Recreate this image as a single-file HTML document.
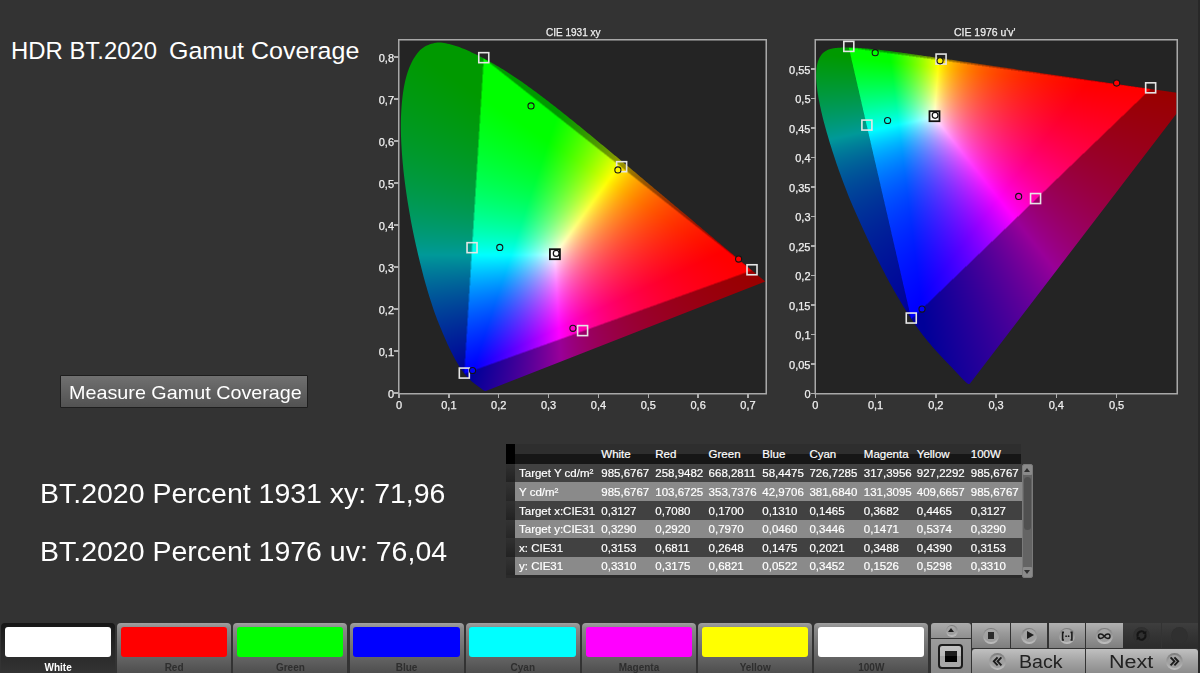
<!DOCTYPE html>
<html><head><meta charset="utf-8">
<style>
*{margin:0;padding:0;box-sizing:border-box}
html,body{width:1200px;height:673px;overflow:hidden;background:#333333;font-family:"Liberation Sans",sans-serif;color:#fff}
body{position:relative}
.abs{position:absolute;white-space:pre}
#cv{position:absolute;left:0;top:0}
.big{position:absolute;white-space:pre;color:#fff;font-size:26px;line-height:30px;transform-origin:0 0}
.tk{position:absolute;font-size:11px;color:#f0f0f0;white-space:nowrap;line-height:12px;-webkit-text-stroke:0.25px #f0f0f0}
.tkr{text-align:right;width:40px}
.tkc{text-align:center;width:40px}
#btn{position:absolute;left:60px;top:375px;width:248px;height:33px;border:1px solid #1e1e1e;background:linear-gradient(#707070,#525252);border-radius:1px}
#btn span{position:absolute;left:7.5px;top:5.6px;transform-origin:0 0;transform:scaleX(1.04);font-size:19px;line-height:22px;color:#fff;white-space:pre}
#tbl{position:absolute;left:506px;top:444px;width:527px;height:134px}
.thb{position:absolute;left:0;top:0;width:9px;height:19.75px;background:#000}
.th1{position:absolute;left:9px;top:0;width:506px;height:10px;background:#2e2e2e}
.th2{position:absolute;left:9px;top:10px;width:506px;height:9.75px;background:#161616}
.tt{position:absolute;font-size:11.5px;line-height:14px;white-space:pre;color:#fff;top:2.7px;-webkit-text-stroke:0.2px #fff}
.th{top:3px;color:#fff}
.row{position:absolute;left:0;width:516px;height:18.6px}
.rd{background:#414141}
.rl{background:#8a8a8a}
.rh{position:absolute;left:0;top:0;width:9px;height:100%;background:linear-gradient(#303030,#222)}
.rl .rh{background:linear-gradient(#333,#262626)}
.sb{position:absolute;left:516px;top:19.75px;width:11px;height:114px;background:#646464;border:1px solid #7a7a7a;border-radius:2px}
.sbt{position:absolute;left:1px;top:12px;width:7px;height:53px;background:#505050;border-radius:3.5px}
.sbb{position:absolute;left:0;width:9px;height:10px;background:#8a8a8a;border-radius:1px}
.sbu,.sbd{position:absolute;left:1px;width:0;height:0;border-left:3.5px solid transparent;border-right:3.5px solid transparent}
.sbu{top:3px;border-bottom:4px solid #303030}
.sbd{top:3px;border-top:4px solid #303030}
#bar{position:absolute;left:0;top:623px;width:1200px;height:50px}
.tab{position:absolute;top:0;width:114.2px;height:50px;border-radius:4px 4px 0 0;background:linear-gradient(#a0a0a0,#8a8a8a 10%,#6a6a6a 60%,#4e4e4e)}
.tab .sw{position:absolute;left:3.8px;top:4.3px;width:106.4px;height:29.9px;border-radius:3px}
.tab .lb{position:absolute;left:0;width:100%;top:38.5px;text-align:center;font-size:10px;line-height:12px;color:#2e2e2e;font-weight:bold}
.tab.sel{background:linear-gradient(#161616,#1e1e1e 20%,#2a2a2a 60%,#333)}
.tab.sel .lb{color:#fff}
.cbtn{position:absolute;background:linear-gradient(#b4b4b4,#8e8e8e 50%,#6e6e6e)}

.cb{position:absolute}
.mb{top:623px;height:25px;background:linear-gradient(#b2b2b2,#9a9a9a 40%,#7e7e7e)}
.mbd{top:623px;height:25px;background:linear-gradient(#3e3e3e,#343434 50%,#2c2c2c)}
.nb{top:649px;height:24px;background:linear-gradient(#c0c0c0,#a4a4a4 50%,#8c8c8c)}
.ic{position:absolute;width:16.5px;height:16.5px;border-radius:50%;background:linear-gradient(#7c7c7c,#c0c0c0)}.ic::after{content:"";position:absolute;left:1.6px;top:1.6px;right:1.6px;bottom:1.6px;border-radius:50%;background:linear-gradient(#a6a6a6,#9c9c9c)}
.icd{position:absolute;width:17px;height:17px;border-radius:50%;background:radial-gradient(circle,#303030 60%,#262626 100%)}
.nt{position:absolute;top:2px;font-size:17.5px;line-height:22px;color:#222}
.chev{position:absolute;width:15px;text-align:center;font-size:17px;line-height:20px;color:#222}
</style></head><body>
<div class="big" id="t1" style="left:10.5px;top:35.6px;font-size:24.5px;transform:scaleX(0.975)">HDR BT.2020</div><div class="big" id="t1b" style="left:168.5px;top:35.6px;font-size:24.5px;transform:scaleX(1.02)">Gamut Coverage</div>
<svg id="fb" style="position:absolute;left:0;top:0" width="1200" height="673">
<defs><clipPath id="c1"><rect x="399.5" y="40.5" width="366" height="352.5"/></clipPath><clipPath id="c2"><rect x="816" y="40.5" width="360.5" height="352.5"/></clipPath>
<linearGradient id="gl" x1="0" y1="0" x2="0" y2="1"><stop offset="0" stop-color="#009900"/><stop offset="0.45" stop-color="#009980"/><stop offset="0.75" stop-color="#0040a0"/><stop offset="1" stop-color="#100099"/></linearGradient>
<linearGradient id="gb" x1="0" y1="0" x2="1" y2="0"><stop offset="0" stop-color="#1a0099"/><stop offset="0.5" stop-color="#880088"/><stop offset="1" stop-color="#990000"/></linearGradient>
</defs>
<rect x="399.5" y="40.5" width="367.0" height="352.5" fill="#242424"/>
<g clip-path="url(#c1)"><polygon points="485.8,390.9 485.8,390.9 485.8,390.9 485.8,390.9 485.8,390.9 485.8,390.9 485.8,390.9 485.7,390.9 485.7,390.9 485.7,390.9 485.7,390.9 485.7,390.9 485.7,390.9 485.6,390.9 485.6,390.9 485.6,390.9 485.6,390.9 485.6,390.9 485.6,390.9 485.5,390.9 485.5,391.0 485.5,391.0 485.5,391.0 485.4,391.0 485.4,391.0 485.4,391.0 485.4,391.0 485.3,391.0 485.3,391.0 485.3,391.0 485.3,391.0 485.2,391.0 485.2,391.0 485.2,391.0 485.1,391.0 485.1,391.0 485.1,391.0 485.0,391.0 485.0,391.0 484.9,391.0 484.9,391.0 484.9,391.0 484.8,391.0 484.8,391.0 484.7,391.0 484.7,390.9 484.6,390.9 484.5,390.9 484.5,390.9 484.4,390.8 484.3,390.8 484.2,390.7 484.1,390.7 484.0,390.6 483.9,390.6 483.8,390.5 483.7,390.4 483.6,390.4 483.5,390.3 483.3,390.2 483.2,390.1 483.1,390.0 482.9,389.9 482.7,389.8 482.6,389.7 482.4,389.5 482.2,389.4 482.0,389.2 481.8,389.1 481.6,388.9 481.4,388.8 481.2,388.6 481.0,388.4 480.7,388.2 480.5,388.1 480.2,387.9 479.9,387.7 479.6,387.4 479.3,387.2 479.0,387.0 478.6,386.7 478.3,386.4 477.9,386.2 477.5,385.9 477.1,385.6 476.7,385.3 476.2,384.9 475.8,384.6 475.3,384.2 474.8,383.9 474.3,383.5 473.8,383.0 473.2,382.6 472.6,382.1 472.0,381.6 471.4,381.1 470.8,380.5 470.2,379.9 469.5,379.3 468.8,378.7 468.1,378.0 467.4,377.2 466.6,376.2 465.7,375.2 464.8,374.1 463.9,373.0 462.9,371.7 461.9,370.3 460.9,368.7 459.8,367.0 458.7,365.3 457.5,363.4 456.3,361.3 455.0,359.0 453.6,356.5 452.3,353.8 450.8,351.0 449.3,347.9 447.8,344.6 446.2,341.1 444.5,337.3 442.8,333.2 440.9,328.8 439.0,324.3 437.1,319.4 435.2,314.2 433.3,308.7 431.3,302.9 429.4,296.7 427.4,290.2 425.5,283.4 423.5,276.4 421.6,269.1 419.7,261.5 417.8,253.5 415.9,245.2 414.1,236.8 412.3,228.2 410.7,219.7 409.2,211.0 407.7,202.2 406.4,193.2 405.1,184.3 404.0,175.5 403.1,166.9 402.3,158.4 401.7,150.0 401.2,141.6 400.9,133.5 400.8,125.6 400.9,118.0 401.3,110.6 401.8,103.5 402.5,96.5 403.5,89.9 404.6,83.7 405.9,77.9 407.5,72.6 409.3,67.6 411.4,63.0 413.6,58.8 415.9,55.2 418.4,52.0 421.0,49.3 423.8,47.2 426.8,45.6 429.8,44.3 432.9,43.4 436.0,42.8 439.2,42.6 442.5,42.8 445.8,43.3 449.2,44.1 452.6,45.0 455.9,46.0 459.3,47.1 462.7,48.4 466.1,49.8 469.5,51.4 472.8,52.9 476.1,54.5 479.4,56.1 482.6,57.8 485.8,59.4 488.9,61.2 492.1,62.9 495.2,64.7 498.3,66.6 501.3,68.4 504.4,70.3 507.4,72.2 510.5,74.2 513.5,76.2 516.5,78.2 519.5,80.3 522.5,82.4 525.5,84.5 528.5,86.6 531.5,88.8 534.5,91.0 537.5,93.2 540.5,95.4 543.4,97.7 546.4,100.0 549.4,102.2 552.3,104.5 555.3,106.9 558.3,109.2 561.2,111.5 564.2,113.9 567.2,116.3 570.2,118.6 573.1,121.0 576.1,123.4 579.1,125.9 582.1,128.3 585.0,130.7 588.0,133.1 591.0,135.6 593.9,138.0 596.9,140.5 599.8,142.9 602.8,145.4 605.7,147.8 608.7,150.3 611.6,152.7 614.6,155.2 617.5,157.6 620.4,160.0 623.3,162.5 626.2,164.9 629.1,167.3 632.0,169.7 634.9,172.1 637.7,174.5 640.6,176.9 643.4,179.3 646.2,181.6 649.0,184.0 651.8,186.3 654.5,188.6 657.3,190.9 660.0,193.2 662.7,195.5 665.4,197.7 668.0,200.0 670.6,202.2 673.2,204.3 675.8,206.5 678.4,208.6 680.9,210.7 683.4,212.8 685.8,214.8 688.2,216.9 690.6,218.8 692.9,220.8 695.2,222.7 697.4,224.6 699.6,226.5 701.7,228.3 703.8,230.0 705.8,231.7 707.8,233.3 709.7,235.0 711.6,236.6 713.5,238.1 715.3,239.7 717.1,241.2 718.9,242.6 720.6,244.0 722.2,245.4 723.8,246.7 725.3,248.0 726.8,249.2 728.2,250.4 729.6,251.6 731.0,252.7 732.3,253.8 733.5,254.9 734.7,255.9 735.9,256.9 737.0,257.8 738.1,258.7 739.1,259.6 740.1,260.4 741.1,261.3 742.0,262.0 742.9,262.8 743.8,263.5 744.6,264.2 745.4,264.9 746.2,265.5 746.9,266.1 747.6,266.7 748.3,267.3 749.0,267.9 749.6,268.4 750.2,268.9 750.8,269.4 751.4,269.9 752.0,270.4 752.5,270.8 753.0,271.3 753.6,271.7 754.0,272.1 754.5,272.5 755.0,272.9 755.5,273.3 755.9,273.7 756.3,274.0 756.7,274.4 757.1,274.7 757.5,275.0 757.9,275.3 758.2,275.6 758.6,275.9 758.9,276.2 759.2,276.4 759.5,276.7 759.8,276.9 760.0,277.1 760.3,277.3 760.5,277.5 760.8,277.7 761.0,277.9 761.2,278.1 761.4,278.3 761.6,278.4 761.8,278.6 762.0,278.7 762.1,278.9 762.3,279.0 762.4,279.2 762.6,279.3 762.7,279.4 762.9,279.5 763.0,279.6 763.1,279.7 763.2,279.8 763.3,279.9 763.4,279.9 763.4,280.0 763.5,280.1 763.6,280.1 763.7,280.2 763.8,280.3 763.8,280.3 763.9,280.4 764.0,280.4 764.0,280.5 764.1,280.5 764.2,280.6 764.2,280.6 764.3,280.7 764.3,280.7 764.4,280.8 764.4,280.8 764.5,280.9 764.5,280.9 764.6,281.0 764.7,281.0 764.8,281.1 764.8,281.2 764.9,281.2 765.0,281.3 765.1,281.4 765.2,281.4 765.2,281.5 765.3,281.5 765.3,281.5 765.3,281.6 765.3,281.6 765.3,281.6" fill="url(#gl)"/>
<defs><linearGradient id="xyR" gradientUnits="userSpaceOnUse" x1="752.0" y1="270.4" x2="474.0" y2="216.0"><stop offset="0" stop-color="#ff0000"/><stop offset="0.55" stop-color="#ff0000"/><stop offset="1" stop-color="#000"/></linearGradient><linearGradient id="xyG" gradientUnits="userSpaceOnUse" x1="483.8" y1="58.3" x2="608.2" y2="322.0"><stop offset="0" stop-color="#00ff00"/><stop offset="0.55" stop-color="#00ff00"/><stop offset="1" stop-color="#000"/></linearGradient><linearGradient id="xyB" gradientUnits="userSpaceOnUse" x1="464.3" y1="373.7" x2="617.9" y2="164.3"><stop offset="0" stop-color="#0000ff"/><stop offset="0.55" stop-color="#0000ff"/><stop offset="1" stop-color="#000"/></linearGradient></defs>
<polygon points="752.0,270.4 483.8,58.3 464.3,373.7" fill="#000"/>
<polygon points="752.0,270.4 483.8,58.3 464.3,373.7" fill="url(#xyR)" style="mix-blend-mode:screen"/>
<polygon points="752.0,270.4 483.8,58.3 464.3,373.7" fill="url(#xyG)" style="mix-blend-mode:screen"/>
<polygon points="752.0,270.4 483.8,58.3 464.3,373.7" fill="url(#xyB)" style="mix-blend-mode:screen"/>
</g>
<rect x="398.75" y="39.75" width="368.5" height="354.0" fill="none" stroke="#a8a8a8" stroke-width="1.5"/>
<rect x="816.0" y="40.5" width="360.5" height="352.5" fill="#242424"/>
<g clip-path="url(#c2)"><polygon points="970.0,383.5 970.0,383.5 970.0,383.5 970.0,383.5 970.0,383.5 969.9,383.5 969.9,383.5 969.9,383.5 969.9,383.6 969.9,383.6 969.8,383.7 969.8,383.7 969.8,383.7 969.8,383.7 969.7,383.7 969.7,383.7 969.7,383.7 969.6,383.7 969.6,383.7 969.6,383.7 969.5,383.8 969.5,383.8 969.4,383.9 969.4,383.9 969.4,383.9 969.3,383.9 969.3,383.9 969.2,383.9 969.2,383.9 969.1,383.9 969.1,383.9 969.0,383.9 968.9,383.9 968.9,383.9 968.8,383.9 968.7,383.9 968.7,383.9 968.6,383.9 968.5,383.9 968.4,384.0 968.4,384.0 968.3,384.0 968.2,383.9 968.0,383.9 967.9,383.8 967.8,383.7 967.6,383.6 967.4,383.5 967.3,383.3 967.0,383.2 966.8,383.0 966.5,382.8 966.3,382.6 966.0,382.3 965.7,382.0 965.4,381.7 965.1,381.4 964.7,381.1 964.4,380.8 964.0,380.4 963.6,380.0 963.1,379.5 962.7,379.0 962.2,378.5 961.7,378.0 961.1,377.4 960.5,376.8 960.0,376.2 959.4,375.6 958.7,374.9 958.1,374.2 957.4,373.4 956.7,372.7 956.0,371.9 955.2,371.1 954.4,370.3 953.6,369.4 952.8,368.5 951.8,367.6 950.9,366.6 949.9,365.5 948.8,364.4 947.8,363.3 946.6,362.1 945.5,360.9 944.3,359.7 943.1,358.4 941.8,357.1 940.6,355.7 939.2,354.3 937.8,352.8 936.4,351.2 934.9,349.5 933.3,347.8 931.8,346.0 930.1,344.0 928.4,342.0 926.7,339.8 924.9,337.7 923.1,335.5 921.3,333.1 919.3,330.4 917.1,327.3 914.8,324.0 912.5,320.6 910.0,316.9 907.5,313.0 904.9,308.8 902.1,304.3 899.3,299.6 896.5,294.8 893.6,289.7 890.6,284.4 887.5,278.8 884.4,272.9 881.2,266.7 878.0,260.4 874.8,254.0 871.6,247.4 868.4,240.7 865.2,233.7 862.0,226.7 858.8,219.6 855.6,212.6 852.5,205.5 849.5,198.4 846.7,191.4 844.0,184.3 841.4,177.3 838.9,170.4 836.5,163.6 834.3,157.1 832.3,150.7 830.3,144.5 828.5,138.4 826.7,132.5 825.1,126.8 823.7,121.5 822.5,116.4 821.3,111.6 820.3,107.0 819.4,102.6 818.6,98.5 817.9,94.6 817.4,91.0 817.0,87.6 816.6,84.3 816.4,81.3 816.2,78.4 816.1,75.7 816.2,73.2 816.3,70.9 816.5,68.6 816.8,66.5 817.1,64.5 817.6,62.7 818.1,61.0 818.7,59.5 819.4,58.0 820.1,56.7 820.9,55.4 821.8,54.3 822.7,53.3 823.7,52.4 824.7,51.6 825.8,50.9 826.9,50.3 828.1,49.8 829.2,49.3 830.4,49.0 831.7,48.6 833.0,48.4 834.3,48.2 835.6,48.0 837.0,47.9 838.4,47.8 839.8,47.7 841.2,47.6 842.6,47.6 844.0,47.5 845.5,47.5 846.9,47.5 848.3,47.5 849.7,47.5 851.2,47.6 852.6,47.6 854.1,47.7 855.5,47.7 857.0,47.8 858.5,47.9 860.0,48.0 861.5,48.1 863.0,48.2 864.6,48.3 866.2,48.5 867.8,48.6 869.4,48.8 871.0,48.9 872.7,49.1 874.4,49.3 876.1,49.4 877.8,49.6 879.6,49.9 881.4,50.1 883.2,50.3 885.0,50.5 886.9,50.8 888.8,51.0 890.8,51.2 892.7,51.5 894.7,51.8 896.8,52.0 898.9,52.3 901.0,52.6 903.1,52.9 905.3,53.2 907.5,53.5 909.8,53.8 912.1,54.2 914.4,54.5 916.8,54.8 919.2,55.2 921.7,55.5 924.2,55.9 926.7,56.2 929.3,56.6 932.0,57.0 934.6,57.4 937.4,57.8 940.1,58.2 942.9,58.6 945.8,59.0 948.7,59.4 951.6,59.8 954.6,60.3 957.6,60.7 960.7,61.2 963.8,61.6 966.9,62.1 970.1,62.6 973.4,63.0 976.6,63.5 980.0,64.0 983.3,64.5 986.7,65.0 990.2,65.5 993.6,66.0 997.1,66.5 1000.6,67.0 1004.2,67.5 1007.8,68.1 1011.4,68.6 1015.0,69.1 1018.7,69.7 1022.4,70.2 1026.0,70.7 1029.7,71.3 1033.4,71.8 1037.1,72.4 1040.7,72.9 1044.3,73.4 1047.8,73.9 1051.3,74.4 1054.9,75.0 1058.4,75.5 1061.9,76.0 1065.4,76.5 1068.9,77.0 1072.4,77.5 1075.8,78.0 1079.2,78.5 1082.4,79.0 1085.7,79.4 1088.8,79.9 1091.9,80.4 1095.0,80.8 1098.0,81.2 1100.9,81.7 1103.8,82.1 1106.6,82.5 1109.3,82.9 1112.0,83.3 1114.6,83.7 1117.1,84.0 1119.6,84.4 1122.0,84.8 1124.3,85.1 1126.6,85.4 1128.8,85.7 1130.9,86.1 1133.0,86.4 1134.9,86.6 1136.9,86.9 1138.8,87.2 1140.6,87.5 1142.4,87.7 1144.1,88.0 1145.8,88.2 1147.4,88.5 1149.0,88.7 1150.6,88.9 1152.1,89.2 1153.6,89.4 1155.1,89.6 1156.5,89.8 1157.9,90.0 1159.3,90.2 1160.6,90.4 1161.8,90.6 1163.1,90.8 1164.3,90.9 1165.5,91.1 1166.6,91.3 1167.7,91.4 1168.7,91.6 1169.7,91.7 1170.7,91.9 1171.6,92.0 1172.5,92.1 1173.4,92.3 1174.2,92.4 1174.9,92.5 1175.7,92.6 1176.4,92.7 1177.1,92.8 1177.8,92.9 1178.4,93.0 1179.0,93.1 1179.6,93.2 1180.1,93.2 1180.7,93.3 1181.2,93.4 1181.7,93.5 1182.1,93.5 1182.6,93.6 1183.0,93.7 1183.4,93.7 1183.7,93.8 1184.0,93.8 1184.3,93.9 1184.6,93.9 1184.8,93.9 1185.1,94.0 1185.4,94.0 1185.6,94.1 1185.9,94.1 1186.1,94.1 1186.3,94.2 1186.5,94.2 1186.7,94.2 1186.9,94.2 1187.1,94.3 1187.3,94.3 1187.5,94.3 1187.7,94.4 1187.8,94.4 1188.0,94.4 1188.2,94.4 1188.4,94.5 1188.6,94.5 1188.8,94.5 1189.0,94.6 1189.3,94.6 1189.6,94.6 1189.9,94.7 1190.2,94.7 1190.4,94.8 1190.6,94.8 1190.7,94.8 1190.8,94.8 1190.8,94.8 1190.9,94.8 1190.9,94.8" fill="url(#gl)"/>
<defs><linearGradient id="uvR" gradientUnits="userSpaceOnUse" x1="1150.7" y1="88.9" x2="880.0" y2="183.3"><stop offset="0" stop-color="#ff0000"/><stop offset="0.55" stop-color="#ff0000"/><stop offset="1" stop-color="#000"/></linearGradient><linearGradient id="uvG" gradientUnits="userSpaceOnUse" x1="848.8" y1="47.5" x2="1031.0" y2="204.0"><stop offset="0" stop-color="#00ff00"/><stop offset="0.55" stop-color="#00ff00"/><stop offset="1" stop-color="#000"/></linearGradient><linearGradient id="uvB" gradientUnits="userSpaceOnUse" x1="911.3" y1="319.1" x2="999.7" y2="68.2"><stop offset="0" stop-color="#0000ff"/><stop offset="0.55" stop-color="#0000ff"/><stop offset="1" stop-color="#000"/></linearGradient></defs>
<polygon points="1150.7,88.9 848.8,47.5 911.3,319.1" fill="#000"/>
<polygon points="1150.7,88.9 848.8,47.5 911.3,319.1" fill="url(#uvR)" style="mix-blend-mode:screen"/>
<polygon points="1150.7,88.9 848.8,47.5 911.3,319.1" fill="url(#uvG)" style="mix-blend-mode:screen"/>
<polygon points="1150.7,88.9 848.8,47.5 911.3,319.1" fill="url(#uvB)" style="mix-blend-mode:screen"/>
</g>
<rect x="815.25" y="39.75" width="362.0" height="354.0" fill="none" stroke="#a8a8a8" stroke-width="1.5"/>
</svg>
<canvas id="cv" width="1200" height="673"></canvas>
<div class="tk" style="left:545.5px;top:26px;transform-origin:0 0;transform:scaleX(0.91)">CIE 1931 xy</div>
<div class="tk" style="left:953.5px;top:26px;transform-origin:0 0;transform:scaleX(0.95)">CIE 1976 u'v'</div>
<div id="ticks"><div class="tk tkr" style="left:354.00px;top:387.80px">0</div><div class="abs" style="left:394px;top:392.25px;width:5px;height:1.5px;background:#b0b0b0"></div>
<div class="tk tkr" style="left:354.00px;top:345.80px">0,1</div><div class="abs" style="left:394px;top:350.25px;width:5px;height:1.5px;background:#b0b0b0"></div>
<div class="tk tkr" style="left:354.00px;top:303.80px">0,2</div><div class="abs" style="left:394px;top:308.25px;width:5px;height:1.5px;background:#b0b0b0"></div>
<div class="tk tkr" style="left:354.00px;top:261.80px">0,3</div><div class="abs" style="left:394px;top:266.25px;width:5px;height:1.5px;background:#b0b0b0"></div>
<div class="tk tkr" style="left:354.00px;top:219.80px">0,4</div><div class="abs" style="left:394px;top:224.25px;width:5px;height:1.5px;background:#b0b0b0"></div>
<div class="tk tkr" style="left:354.00px;top:177.80px">0,5</div><div class="abs" style="left:394px;top:182.25px;width:5px;height:1.5px;background:#b0b0b0"></div>
<div class="tk tkr" style="left:354.00px;top:135.80px">0,6</div><div class="abs" style="left:394px;top:140.25px;width:5px;height:1.5px;background:#b0b0b0"></div>
<div class="tk tkr" style="left:354.00px;top:93.80px">0,7</div><div class="abs" style="left:394px;top:98.25px;width:5px;height:1.5px;background:#b0b0b0"></div>
<div class="tk tkr" style="left:354.00px;top:51.80px">0,8</div><div class="abs" style="left:394px;top:56.25px;width:5px;height:1.5px;background:#b0b0b0"></div>
<div class="tk tkc" style="left:379.00px;top:398.50px">0</div><div class="abs" style="left:398.25px;top:394px;width:1.5px;height:4px;background:#b0b0b0"></div>
<div class="tk tkc" style="left:428.86px;top:398.50px">0,1</div><div class="abs" style="left:448.11px;top:394px;width:1.5px;height:4px;background:#b0b0b0"></div>
<div class="tk tkc" style="left:478.72px;top:398.50px">0,2</div><div class="abs" style="left:497.97px;top:394px;width:1.5px;height:4px;background:#b0b0b0"></div>
<div class="tk tkc" style="left:528.58px;top:398.50px">0,3</div><div class="abs" style="left:547.83px;top:394px;width:1.5px;height:4px;background:#b0b0b0"></div>
<div class="tk tkc" style="left:578.44px;top:398.50px">0,4</div><div class="abs" style="left:597.69px;top:394px;width:1.5px;height:4px;background:#b0b0b0"></div>
<div class="tk tkc" style="left:628.30px;top:398.50px">0,5</div><div class="abs" style="left:647.55px;top:394px;width:1.5px;height:4px;background:#b0b0b0"></div>
<div class="tk tkc" style="left:678.16px;top:398.50px">0,6</div><div class="abs" style="left:697.41px;top:394px;width:1.5px;height:4px;background:#b0b0b0"></div>
<div class="tk tkc" style="left:728.02px;top:398.50px">0,7</div><div class="abs" style="left:747.27px;top:394px;width:1.5px;height:4px;background:#b0b0b0"></div>
<div class="tk tkr" style="left:770.50px;top:388.10px">0</div><div class="abs" style="left:810.5px;top:392.55px;width:5px;height:1.5px;background:#b0b0b0"></div>
<div class="tk tkr" style="left:770.50px;top:358.64px">0,05</div><div class="abs" style="left:810.5px;top:363.09px;width:5px;height:1.5px;background:#b0b0b0"></div>
<div class="tk tkr" style="left:770.50px;top:329.17px">0,1</div><div class="abs" style="left:810.5px;top:333.62px;width:5px;height:1.5px;background:#b0b0b0"></div>
<div class="tk tkr" style="left:770.50px;top:299.70px">0,15</div><div class="abs" style="left:810.5px;top:304.15px;width:5px;height:1.5px;background:#b0b0b0"></div>
<div class="tk tkr" style="left:770.50px;top:270.24px">0,2</div><div class="abs" style="left:810.5px;top:274.69px;width:5px;height:1.5px;background:#b0b0b0"></div>
<div class="tk tkr" style="left:770.50px;top:240.78px">0,25</div><div class="abs" style="left:810.5px;top:245.23px;width:5px;height:1.5px;background:#b0b0b0"></div>
<div class="tk tkr" style="left:770.50px;top:211.31px">0,3</div><div class="abs" style="left:810.5px;top:215.76px;width:5px;height:1.5px;background:#b0b0b0"></div>
<div class="tk tkr" style="left:770.50px;top:181.85px">0,35</div><div class="abs" style="left:810.5px;top:186.30px;width:5px;height:1.5px;background:#b0b0b0"></div>
<div class="tk tkr" style="left:770.50px;top:152.38px">0,4</div><div class="abs" style="left:810.5px;top:156.83px;width:5px;height:1.5px;background:#b0b0b0"></div>
<div class="tk tkr" style="left:770.50px;top:122.92px">0,45</div><div class="abs" style="left:810.5px;top:127.37px;width:5px;height:1.5px;background:#b0b0b0"></div>
<div class="tk tkr" style="left:770.50px;top:93.45px">0,5</div><div class="abs" style="left:810.5px;top:97.90px;width:5px;height:1.5px;background:#b0b0b0"></div>
<div class="tk tkr" style="left:770.50px;top:63.98px">0,55</div><div class="abs" style="left:810.5px;top:68.44px;width:5px;height:1.5px;background:#b0b0b0"></div>
<div class="tk tkc" style="left:795.30px;top:398.50px">0</div><div class="abs" style="left:814.55px;top:394px;width:1.5px;height:4px;background:#b0b0b0"></div>
<div class="tk tkc" style="left:855.55px;top:398.50px">0,1</div><div class="abs" style="left:874.80px;top:394px;width:1.5px;height:4px;background:#b0b0b0"></div>
<div class="tk tkc" style="left:915.80px;top:398.50px">0,2</div><div class="abs" style="left:935.05px;top:394px;width:1.5px;height:4px;background:#b0b0b0"></div>
<div class="tk tkc" style="left:976.05px;top:398.50px">0,3</div><div class="abs" style="left:995.30px;top:394px;width:1.5px;height:4px;background:#b0b0b0"></div>
<div class="tk tkc" style="left:1036.30px;top:398.50px">0,4</div><div class="abs" style="left:1055.55px;top:394px;width:1.5px;height:4px;background:#b0b0b0"></div>
<div class="tk tkc" style="left:1096.55px;top:398.50px">0,5</div><div class="abs" style="left:1115.80px;top:394px;width:1.5px;height:4px;background:#b0b0b0"></div></div>
<div id="btn"><span>Measure Gamut Coverage</span></div>
<div class="big" id="p1" style="left:40px;top:478.5px;font-size:27.5px;transform:scaleX(1.036)">BT.2020 Percent 1931 xy: 71,96</div>
<div class="big" id="p2" style="left:40px;top:536.5px;font-size:27.5px;transform:scaleX(1.036)">BT.2020 Percent 1976 uv: 76,04</div>
<div id="tbl">
<div class="thb"></div><div class="th1"></div><div class="th2"></div>
<div class="tt th" style="left:95.3px">White</div>
<div class="tt th" style="left:149.3px">Red</div>
<div class="tt th" style="left:202.6px">Green</div>
<div class="tt th" style="left:256.3px">Blue</div>
<div class="tt th" style="left:303.4px">Cyan</div>
<div class="tt th" style="left:357.8px">Magenta</div>
<div class="tt th" style="left:410.8px">Yellow</div>
<div class="tt th" style="left:464.8px">100W</div>
<div class="row rd" style="top:19.75px"><div class="rh"></div><div class="tt" style="left:13px">Target Y cd/m²</div><div class="tt" style="left:95.3px">985,6767</div><div class="tt" style="left:149.3px">258,9482</div><div class="tt" style="left:202.6px">668,2811</div><div class="tt" style="left:256.3px">58,4475</div><div class="tt" style="left:303.4px">726,7285</div><div class="tt" style="left:357.8px">317,3956</div><div class="tt" style="left:410.8px">927,2292</div><div class="tt" style="left:464.8px">985,6767</div></div>
<div class="row rl" style="top:38.35px"><div class="rh"></div><div class="tt" style="left:13px">Y cd/m²</div><div class="tt" style="left:95.3px">985,6767</div><div class="tt" style="left:149.3px">103,6725</div><div class="tt" style="left:202.6px">353,7376</div><div class="tt" style="left:256.3px">42,9706</div><div class="tt" style="left:303.4px">381,6840</div><div class="tt" style="left:357.8px">131,3095</div><div class="tt" style="left:410.8px">409,6657</div><div class="tt" style="left:464.8px">985,6767</div></div>
<div class="row rd" style="top:56.95px"><div class="rh"></div><div class="tt" style="left:13px">Target x:CIE31</div><div class="tt" style="left:95.3px">0,3127</div><div class="tt" style="left:149.3px">0,7080</div><div class="tt" style="left:202.6px">0,1700</div><div class="tt" style="left:256.3px">0,1310</div><div class="tt" style="left:303.4px">0,1465</div><div class="tt" style="left:357.8px">0,3682</div><div class="tt" style="left:410.8px">0,4465</div><div class="tt" style="left:464.8px">0,3127</div></div>
<div class="row rl" style="top:75.55px"><div class="rh"></div><div class="tt" style="left:13px">Target y:CIE31</div><div class="tt" style="left:95.3px">0,3290</div><div class="tt" style="left:149.3px">0,2920</div><div class="tt" style="left:202.6px">0,7970</div><div class="tt" style="left:256.3px">0,0460</div><div class="tt" style="left:303.4px">0,3446</div><div class="tt" style="left:357.8px">0,1471</div><div class="tt" style="left:410.8px">0,5374</div><div class="tt" style="left:464.8px">0,3290</div></div>
<div class="row rd" style="top:94.15px"><div class="rh"></div><div class="tt" style="left:13px">x: CIE31</div><div class="tt" style="left:95.3px">0,3153</div><div class="tt" style="left:149.3px">0,6811</div><div class="tt" style="left:202.6px">0,2648</div><div class="tt" style="left:256.3px">0,1475</div><div class="tt" style="left:303.4px">0,2021</div><div class="tt" style="left:357.8px">0,3488</div><div class="tt" style="left:410.8px">0,4390</div><div class="tt" style="left:464.8px">0,3153</div></div>
<div class="row rl" style="top:112.75px"><div class="rh"></div><div class="tt" style="left:13px">y: CIE31</div><div class="tt" style="left:95.3px">0,3310</div><div class="tt" style="left:149.3px">0,3175</div><div class="tt" style="left:202.6px">0,6821</div><div class="tt" style="left:256.3px">0,0522</div><div class="tt" style="left:303.4px">0,3452</div><div class="tt" style="left:357.8px">0,1526</div><div class="tt" style="left:410.8px">0,5298</div><div class="tt" style="left:464.8px">0,3310</div></div>
<div style="position:absolute;left:0;top:131.35px;width:516px;height:2.6px;background:#2a2a2a"></div><div class="sb"><div class="sbb" style="top:0"><div class="sbu"></div></div><div class="sbt"></div><div class="sbb" style="bottom:0"><div class="sbd"></div></div></div>
</div>
<div id="bar">
 <div class="tab sel" style="left:1px"><div class="sw" style="background:#fff"></div><div class="lb">White</div></div>
 <div class="tab" style="left:117px"><div class="sw" style="background:#ff0000"></div><div class="lb">Red</div></div>
 <div class="tab" style="left:233.3px"><div class="sw" style="background:#00ff00"></div><div class="lb">Green</div></div>
 <div class="tab" style="left:349.5px"><div class="sw" style="background:#0000ff"></div><div class="lb">Blue</div></div>
 <div class="tab" style="left:465.7px"><div class="sw" style="background:#00ffff"></div><div class="lb">Cyan</div></div>
 <div class="tab" style="left:581.9px"><div class="sw" style="background:#ff00ff"></div><div class="lb">Magenta</div></div>
 <div class="tab" style="left:698.1px"><div class="sw" style="background:#ffff00"></div><div class="lb">Yellow</div></div>
 <div class="tab" style="left:814.2px"><div class="sw" style="background:#fff"></div><div class="lb">100W</div></div>
</div>

<div id="ctrl">
 <div class="cb" style="left:931px;top:623px;width:40px;height:14.6px;border-radius:3px 3px 0 0;background:linear-gradient(#ababab,#8f8f8f)"><div class="ic" style="left:14.5px;top:1.5px;width:12px;height:12px"></div><div style="position:absolute;left:16.8px;top:5px;width:0;height:0;border-left:3.7px solid transparent;border-right:3.7px solid transparent;border-bottom:4.3px solid #1e1e1e"></div></div>
 <div class="cb" style="left:931px;top:639px;width:40px;height:34px;background:linear-gradient(#9c9c9c,#8a8a8a)">
   <div style="position:absolute;left:7px;top:4.5px;width:25.3px;height:25.2px;border:2.5px solid #1c1c1c;border-radius:4px;background:linear-gradient(#c2c2c2,#b8b8b8 50%,#a6a6a6 50%,#a8a8a8)"></div>
   <div style="position:absolute;left:14px;top:11.7px;width:11.5px;height:11px;background:linear-gradient(#1c1c1c,#1c1c1c 45%,#000 45%)"></div>
 </div>
 <div class="cb mb" style="left:972px;width:38px"><div class="ic" style="left:10.8px;top:4.5px"></div><div style="position:absolute;left:15.5px;top:9.3px;width:6.5px;height:6.7px;background:#2a2a2a"></div></div>
 <div class="cb mb" style="left:1010.8px;width:36.5px"><div class="ic" style="left:10.2px;top:4.5px"></div><div style="position:absolute;left:15.8px;top:8px;width:0;height:0;border-top:4.5px solid transparent;border-bottom:4.5px solid transparent;border-left:7.5px solid #1e1e1e"></div></div>
 <div class="cb mb" style="left:1048.5px;width:36.5px"><div class="ic" style="left:10px;top:4.5px"></div><svg style="position:absolute;left:10px;top:4.5px" width="16.5" height="16.5" viewBox="0 0 16.5 16.5"><path d="M5 4.4 H3.6 V12 H5 M11.5 4.4 H12.9 V12 H11.5 M6.3 8.2 H7.9" fill="none" stroke="#1a1a1a" stroke-width="1.6"/><circle cx="9.6" cy="8.2" r="0.9" fill="#1a1a1a"/></svg></div>
 <div class="cb mb" style="left:1086px;width:36.5px"><div class="ic" style="left:10px;top:4.5px"></div><svg style="position:absolute;left:10px;top:4.5px" width="16.5" height="16.5" viewBox="0 0 16.5 16.5"><path d="M8.25 8.2 C6.8 6.3 5.6 6 4.6 6 C3.3 6 2.5 7 2.5 8.2 C2.5 9.4 3.3 10.4 4.6 10.4 C5.6 10.4 6.8 10.1 8.25 8.2 C9.7 6.3 10.9 6 11.9 6 C13.2 6 14 7 14 8.2 C14 9.4 13.2 10.4 11.9 10.4 C10.9 10.4 9.7 10.1 8.25 8.2Z" fill="none" stroke="#1a1a1a" stroke-width="1.5"/></svg></div>
 <div class="cb mbd" style="left:1123px;width:37.7px"><div class="icd" style="left:10px;top:4px"></div><svg style="position:absolute;left:10px;top:4px" width="17" height="17" viewBox="0 0 17 17"><path d="M4.6 9.2 A4 4 0 0 1 11.6 5.8 M12.4 7.8 A4 4 0 0 1 5.4 11.2" fill="none" stroke="#141414" stroke-width="2"/><path d="M13.4 3.8 L13.2 8 L9.6 6.6Z M3.6 13.2 L3.8 9 L7.4 10.4Z" fill="#141414"/></svg></div>
 <div class="cb mbd" style="left:1161.5px;width:36.5px"><div class="icd" style="left:9.5px;top:4px"></div></div>
 <div class="cb nb" style="left:972px;width:113.3px;border-radius:3px 0 0 0"><div class="ic" style="left:17px;top:4px;width:17px;height:17px"></div><svg style="position:absolute;left:17px;top:4px" width="17" height="17" viewBox="0 0 17 17"><path d="M8.6 4.3 L4.8 8.3 L8.6 12.3 M12.4 4.3 L8.6 8.3 L12.4 12.3" fill="none" stroke="#1c1c1c" stroke-width="1.9"/></svg><div class="nt" style="left:47px;transform-origin:0 0;transform:scaleX(1.12)">Back</div></div>
 <div class="cb nb" style="left:1086px;width:112px;border-radius:0 3px 0 0"><div class="nt" style="left:22.5px;transform-origin:0 0;transform:scaleX(1.23)">Next</div><div class="ic" style="left:80px;top:4px;width:17px;height:17px"></div><svg style="position:absolute;left:80px;top:4px" width="17" height="17" viewBox="0 0 17 17"><path d="M4.6 4.3 L8.4 8.3 L4.6 12.3 M8.4 4.3 L12.2 8.3 L8.4 12.3" fill="none" stroke="#1c1c1c" stroke-width="1.9"/></svg></div>
 <div style="position:absolute;left:1198px;top:0;width:2px;height:673px;background:#282828"></div>
</div>
<script>
(function(){
var fbe=document.getElementById("fb");if(fbe)fbe.parentNode.removeChild(fbe);
var L=[[0.1741,0.0050],[0.1740,0.0050],[0.1738,0.0049],[0.1736,0.0049],[0.1733,0.0048],[0.1730,0.0048],[0.1726,0.0048],[0.1721,0.0048],[0.1714,0.0051],[0.1703,0.0058],[0.1689,0.0069],[0.1669,0.0086],[0.1644,0.0109],[0.1611,0.0138],[0.1566,0.0177],[0.1510,0.0227],[0.1440,0.0297],[0.1355,0.0399],[0.1241,0.0578],[0.1096,0.0868],[0.0913,0.1327],[0.0687,0.2007],[0.0454,0.2950],[0.0235,0.4127],[0.0082,0.5384],[0.0039,0.6548],[0.0139,0.7502],[0.0389,0.8120],[0.0743,0.8338],[0.1142,0.8262],[0.1547,0.8059],[0.1929,0.7816],[0.2296,0.7543],[0.2658,0.7243],[0.3016,0.6923],[0.3373,0.6589],[0.3731,0.6245],[0.4087,0.5896],[0.4441,0.5547],[0.4788,0.5202],[0.5125,0.4866],[0.5448,0.4544],[0.5752,0.4242],[0.6029,0.3965],[0.6270,0.3725],[0.6482,0.3514],[0.6658,0.3340],[0.6801,0.3197],[0.6915,0.3083],[0.7006,0.2993],[0.7079,0.2920],[0.7140,0.2859],[0.7190,0.2809],[0.7230,0.2770],[0.7260,0.2740],[0.7283,0.2717],[0.7300,0.2700],[0.7311,0.2689],[0.7320,0.2680],[0.7327,0.2673],[0.7334,0.2666],[0.7344,0.2656],[0.7347,0.2653]];
var LS=[];(function(){var n=L.length;for(var i=0;i<n-1;i++){var p0=L[Math.max(i-1,0)],p1=L[i],p2=L[i+1],p3=L[Math.min(i+2,n-1)];for(var k=0;k<12;k++){var t=k/12,t2=t*t,t3=t2*t;var f=function(a,b,c,d){return 0.5*((2*b)+(-a+c)*t+(2*a-5*b+4*c-d)*t2+(-a+3*b-3*c+d)*t3);};LS.push([f(p0[0],p1[0],p2[0],p3[0]),f(p0[1],p1[1],p2[1],p3[1])]);}}LS.push(L[n-1]);})();
var M=[[1.7166512,-0.3556708,-0.2533663],[-0.6666844,1.6164812,0.0157685],[0.0176399,-0.0427706,0.9421031]];
var GAM=1.7, GAMO=1.0, DIM=0.6;
var S=[[3.2404542,-1.5371385,-0.4985314],[-0.9692660,1.8760108,0.0415560],[0.0556434,-0.2040259,1.0572252]];
function color(x,y,out){
  var z=1-x-y;
  var inside=(M[0][0]*x+M[0][1]*y+M[0][2]*z>=0)&&(M[1][0]*x+M[1][1]*y+M[1][2]*z>=0)&&(M[2][0]*x+M[2][1]*y+M[2][2]*z>=0);
  var r=S[0][0]*x+S[0][1]*y+S[0][2]*z;
  var g=S[1][0]*x+S[1][1]*y+S[1][2]*z;
  var b=S[2][0]*x+S[2][1]*y+S[2][2]*z;
  if(r<0)r=0;if(g<0)g=0;if(b<0)b=0;
  var m=Math.max(r,g,b)||1;
  r/=m;g/=m;b/=m;
  var gm=inside?GAM:GAMO; if(gm!==1){r=Math.pow(r,gm);g=Math.pow(g,gm);b=Math.pow(b,gm);}
  var d=inside?1:DIM;
  out[0]+=r*d;out[1]+=g*d;out[2]+=b*d;
}
var cv=document.getElementById('cv');var ctx=cv.getContext('2d');
function plot(P){
  GAM=P.gam;
  // P: left,top,right,bottom (pixel inner area), x0px,y0px, sx, sy, mode
  var w=Math.ceil(P.r-P.l), h=Math.ceil(P.b-P.t);
  var off=document.createElement('canvas');off.width=w;off.height=h;
  var oc=off.getContext('2d');var id=oc.createImageData(w,h);var d=id.data;
  var acc=[0,0,0];var N=2;
  for(var j=0;j<h;j++){for(var i=0;i<w;i++){
    acc[0]=acc[1]=acc[2]=0;
    for(var a=0;a<N;a++)for(var c=0;c<N;c++){
      var px=P.l+i+(a+0.5)/N, py=P.t+j+(c+0.5)/N;
      var u=(px-P.x0)/P.sx, v=(P.y0-py)/P.sy;
      var x,y;
      if(P.mode==='uv'){var den=6*u-16*v+12;x=9*u/den;y=4*v/den;}else{x=u;y=v;}
      if(y<=0.0001){y=0.0001;}
      color(x,y,acc);
    }
    var k=(j*w+i)*4;
    d[k]=acc[0]/(N*N)*255;d[k+1]=acc[1]/(N*N)*255;d[k+2]=acc[2]/(N*N)*255;d[k+3]=255;
  }}
  oc.putImageData(id,0,0);
  ctx.save();
  ctx.fillStyle=P.bg;ctx.fillRect(P.l,P.t,P.r-P.l,P.b-P.t);
  ctx.beginPath();ctx.rect(P.l,P.t,P.r-P.l,P.b-P.t);ctx.clip();
  ctx.beginPath();
  for(var n=0;n<LS.length;n++){
    var xx=LS[n][0],yy=LS[n][1],u,v;
    if(P.mode==='uv'){var den=-2*xx+12*yy+3;u=4*xx/den;v=9*yy/den;}else{u=xx;v=yy;}
    var X=P.x0+u*P.sx, Y=P.y0-v*P.sy;
    if(n===0)ctx.moveTo(X,Y);else ctx.lineTo(X,Y);
  }
  ctx.closePath();ctx.clip();
  ctx.drawImage(off,P.l,P.t);
  ctx.restore();
  // border
  ctx.strokeStyle=P.border;ctx.lineWidth=1.5;
  ctx.beginPath();ctx.moveTo(P.l-0.75,P.t-0.75);ctx.lineTo(P.r+0.75,P.t-0.75);ctx.lineTo(P.r+0.75,P.b+0.75);ctx.lineTo(P.l-0.75,P.b+0.75);ctx.closePath();ctx.stroke();
  // markers
  function toPx(xx,yy){var u,v;if(P.mode==='uv'){var den=-2*xx+12*yy+3;u=4*xx/den;v=9*yy/den;}else{u=xx;v=yy;}return [P.x0+u*P.sx,P.y0-v*P.sy-(P.mode==='uv'?1.1:0.6)];}
  var T=[[0.3127,0.3290],[0.7080,0.2920],[0.1700,0.7970],[0.1310,0.0460],[0.1465,0.3446],[0.3682,0.1471],[0.4465,0.5374]];
  var Ms=[[0.3153,0.3310],[0.6811,0.3175],[0.2648,0.6821],[0.1475,0.0522],[0.2021,0.3452],[0.3488,0.1526],[0.4390,0.5298]];
  function fillc(xx,yy){var a=[0,0,0];var z=1-xx-yy;var r=S[0][0]*xx+S[0][1]*yy+S[0][2]*z,g=S[1][0]*xx+S[1][1]*yy+S[1][2]*z,b=S[2][0]*xx+S[2][1]*yy+S[2][2]*z;r=Math.max(r,0);g=Math.max(g,0);b=Math.max(b,0);var m=Math.max(r,g,b)||1;r=Math.pow(r/m,GAM);g=Math.pow(g/m,GAM);b=Math.pow(b/m,GAM);return 'rgb('+Math.round(r*255)+','+Math.round(g*255)+','+Math.round(b*255)+')';}
  for(var q=1;q<T.length;q++){
    var p=toPx(T[q][0],T[q][1]);
    ctx.strokeStyle='#e6e6e6';ctx.lineWidth=1.6;
    ctx.strokeRect(p[0]-5,p[1]-5,10,10);
  }
  for(var q=1;q<T.length;q++){
    var p=toPx(Ms[q][0],Ms[q][1]);
    ctx.fillStyle=fillc(Ms[q][0],Ms[q][1]);ctx.strokeStyle='#141414';ctx.lineWidth=1.1;
    ctx.beginPath();ctx.arc(p[0],p[1],3.05,0,Math.PI*2);ctx.fill();ctx.stroke();
  }
  var p=toPx(T[0][0],T[0][1]);
  ctx.fillStyle='#fafafa';ctx.fillRect(p[0]-5,p[1]-5,10,10);
  ctx.strokeStyle='#111';ctx.lineWidth=1.8;ctx.strokeRect(p[0]-5,p[1]-5,10,10);
  var p2=toPx(Ms[0][0],Ms[0][1]);
  ctx.fillStyle='#fff';ctx.strokeStyle='#111';ctx.lineWidth=1.25;ctx.beginPath();ctx.arc(p2[0],p2[1],2.9,0,Math.PI*2);ctx.fill();ctx.stroke();
}
plot({l:399.5,t:40.5,r:765.5,b:393,x0:399,y0:393,sx:498.6,sy:420,mode:'xy',gam:1.0,bg:'#242424',border:'#a8a8a8'});
plot({l:816,t:40.5,r:1176.5,b:393,x0:815.3,y0:393.3,sx:602.5,sy:589.3,mode:'uv',gam:1.0,bg:'#242424',border:'#a8a8a8'});
})();
</script>

</body></html>
